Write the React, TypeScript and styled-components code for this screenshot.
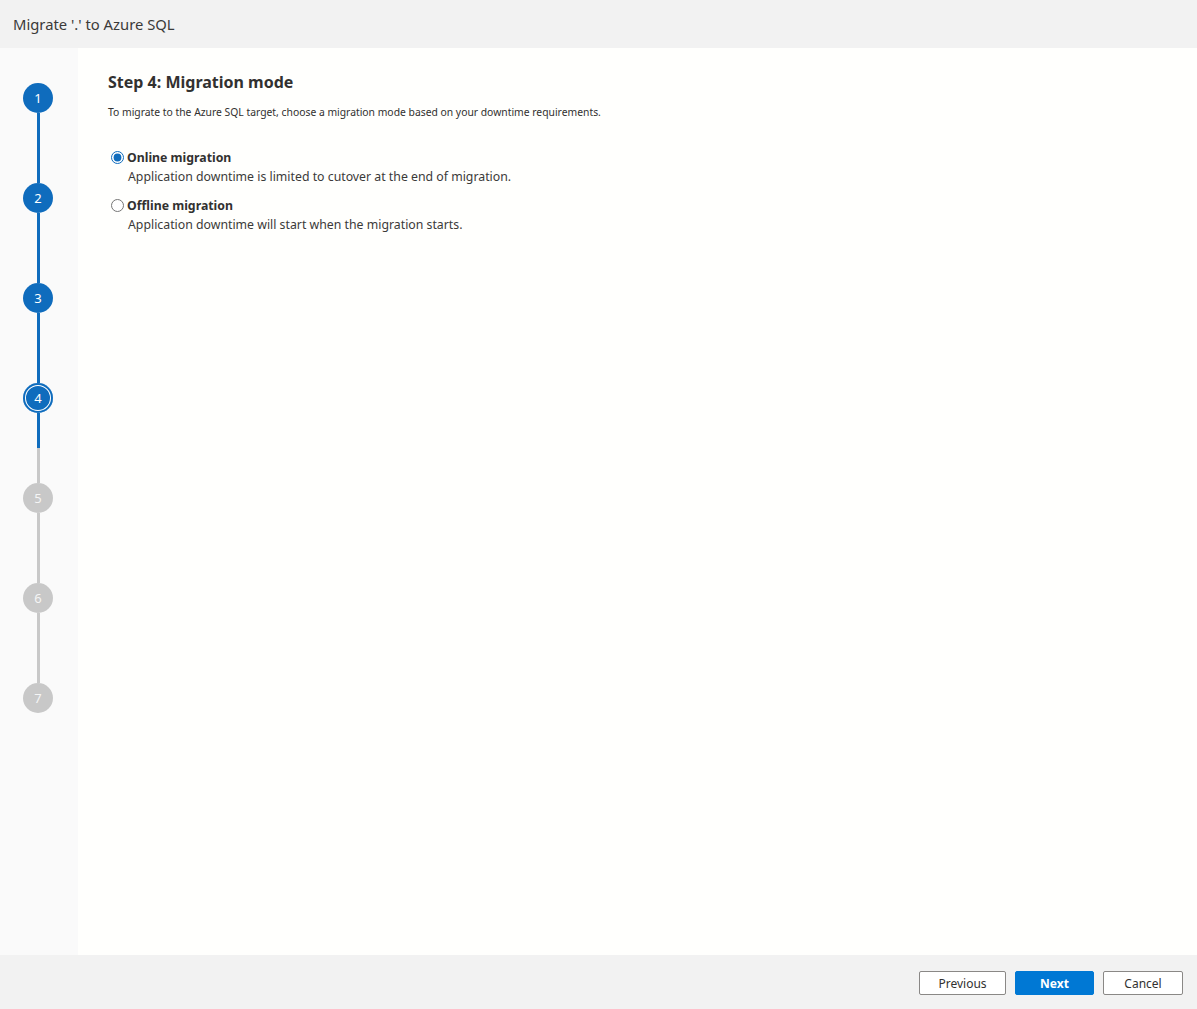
import React, { useState } from "react";
import styled, { createGlobalStyle } from "styled-components";

const GlobalStyle = createGlobalStyle`
  html, body {
    margin: 0;
    padding: 0;
    height: 100%;
  }
  body {
    font-family: "Noto Sans", "Open Sans", Arial, sans-serif;
    color: #323130;
  }
  #root {
    height: 100%;
  }
`;

const Page = styled.div`
  display: flex;
  flex-direction: column;
  width: 1197px;
  height: 1009px;
  background: #f2f2f2;
`;

const Header = styled.div`
  height: 48px;
  display: flex;
  align-items: center;
  padding-left: 13px;
  font-size: 14.8px;
  color: #3b3a39;
  flex-shrink: 0;
`;

const Body = styled.div`
  flex: 1;
  display: flex;
  background: #fffffd;
`;

const Sidebar = styled.div`
  width: 78px;
  background: #fafafa;
  display: flex;
  flex-direction: column;
  align-items: flex-start;
  padding-top: 35px;
  padding-left: 23px;
  box-sizing: border-box;
`;

const StepItem = styled.div`
  display: flex;
  flex-direction: column;
  align-items: center;
`;

const Connector = styled.div<{ $active: boolean; $split?: boolean }>`
  width: 3px;
  height: 70px;
  background: ${(p) =>
    p.$split
      ? "linear-gradient(#0f6cbd 0 35px, #c8c8c8 35px)"
      : p.$active
      ? "#0f6cbd"
      : "#c8c8c8"};
`;

const Circle = styled.div<{ $done: boolean; $current?: boolean }>`
  width: 30px;
  height: 30px;
  border-radius: 50%;
  box-sizing: border-box;
  display: flex;
  align-items: center;
  justify-content: center;
  font-size: 13px;
  color: ${(p) => (p.$done ? "#ffffff" : "#f5f5f5")};
  background: ${(p) => (p.$done ? "#0f6cbd" : "#c8c8c8")};
  box-shadow: ${(p) => (p.$current ? "inset 0 0 0 2px #0f6cbd, inset 0 0 0 3px #ffffff" : "none")};
`;

const Content = styled.div`
  flex: 1;
  padding: 23px 30px;
`;

const Title = styled.h2`
  margin: 0;
  font-size: 16px;
  font-weight: 700;
  color: #323130;
`;

const Description = styled.p`
  margin: 12px 0 0;
  font-size: 10.35px;
  color: #323130;
`;

const Options = styled.div`
  margin-top: 30px;
  display: flex;
  flex-direction: column;
  gap: 12px;
`;

const Option = styled.label`
  display: flex;
  flex-direction: column;
  cursor: pointer;
`;

const OptionHead = styled.div`
  display: flex;
  align-items: center;
  gap: 3px;
  font-size: 12.3px;
  font-weight: 700;
  color: #323130;
`;

const Radio = styled.input`
  margin: 0 0 0 3px;
  width: 13px;
  height: 13px;
  accent-color: #0f6cbd;
`;

const OptionText = styled.div`
  margin-left: 20px;
  margin-top: 2px;
  font-size: 12.3px;
  color: #3b3a39;
`;

const Footer = styled.div`
  height: 54px;
  display: flex;
  align-items: center;
  justify-content: flex-end;
  gap: 9px;
  padding: 2px 14px 0 0;
  box-sizing: border-box;
  flex-shrink: 0;
`;

const Button = styled.button<{ $primary?: boolean; $width: number }>`
  width: ${(p) => p.$width}px;
  height: 24px;
  font-family: inherit;
  font-size: 12px;
  font-weight: ${(p) => (p.$primary ? 700 : 400)};
  color: ${(p) => (p.$primary ? "#ffffff" : "#323130")};
  background: ${(p) => (p.$primary ? "#0078d4" : "#ffffff")};
  border: 1px solid ${(p) => (p.$primary ? "#0078d4" : "#8a8886")};
  border-radius: 2px;
  padding: 0;
  cursor: pointer;
`;

const steps = [1, 2, 3, 4, 5, 6, 7];
const current = 4;

export default function App() {
  const [mode, setMode] = useState("online");

  return (
    <>
      <GlobalStyle />
      <Page>
        <Header>Migrate '.' to Azure SQL</Header>
        <Body>
          <Sidebar>
            {steps.map((s, i) => (
              <StepItem key={s}>
                <Circle $done={s <= current} $current={s === current}>
                  {s}
                </Circle>
                {i < steps.length - 1 && (
                  <Connector $active={s < current} $split={s === current} />
                )}
              </StepItem>
            ))}
          </Sidebar>
          <Content>
            <Title>Step 4: Migration mode</Title>
            <Description>
              To migrate to the Azure SQL target, choose a migration mode based on your downtime requirements.
            </Description>
            <Options>
              <Option>
                <OptionHead>
                  <Radio
                    type="radio"
                    name="mode"
                    checked={mode === "online"}
                    onChange={() => setMode("online")}
                  />
                  Online migration
                </OptionHead>
                <OptionText>Application downtime is limited to cutover at the end of migration.</OptionText>
              </Option>
              <Option>
                <OptionHead>
                  <Radio
                    type="radio"
                    name="mode"
                    checked={mode === "offline"}
                    onChange={() => setMode("offline")}
                  />
                  Offline migration
                </OptionHead>
                <OptionText>Application downtime will start when the migration starts.</OptionText>
              </Option>
            </Options>
          </Content>
        </Body>
        <Footer>
          <Button $width={87}>Previous</Button>
          <Button $primary $width={79}>Next</Button>
          <Button $width={80}>Cancel</Button>
        </Footer>
      </Page>
    </>
  );
}
